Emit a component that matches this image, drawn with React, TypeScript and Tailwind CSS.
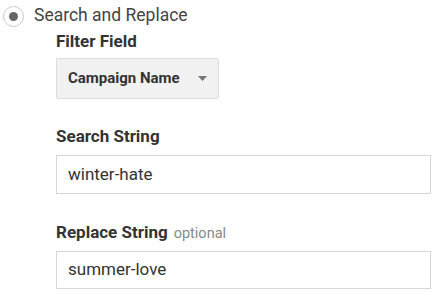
export default function App() {
  return (
    <div className="w-[444px] h-[302px] bg-white overflow-hidden font-['Roboto',sans-serif] text-[#333]">
      <div className="flex items-center h-[32px] pl-[3px]">
        <div className="w-[21px] h-[21px] rounded-full border border-[#c8c8c8] flex items-center justify-center">
          <div className="w-[9px] h-[9px] rounded-full bg-[#666]" />
        </div>
        <span className="ml-[10px] text-[17.5px] text-[#444] leading-none">Search and Replace</span>
      </div>
      <div className="pl-[56px] pr-[13px]">
        <div className="text-[17px] font-bold text-[#333] leading-[20px] -mt-[1px]">Filter Field</div>
        <div className="mt-[7px] w-[163px] h-[41px] bg-[#f1f1f1] border border-[#dcdcdc] rounded-[2px] flex items-center pl-[11px] pr-[11px]">
          <span className="text-[15px] font-bold text-[#333] flex-1">Campaign Name</span>
          <svg width="9" height="5" viewBox="0 0 9 5"><path d="M0 0h9L4.5 5z" fill="#777" /></svg>
        </div>
        <div className="mt-[27px] text-[17px] font-bold text-[#333] leading-[20px]">Search String</div>
        <div className="mt-[9px] h-[39px] border border-[#d6d6d6] flex items-center pl-[11px]">
          <span className="text-[17px] text-[#333]">winter-hate</span>
        </div>
        <div className="mt-[28px] flex items-baseline leading-[20px]">
          <span className="text-[17px] font-bold text-[#333]">Replace String</span>
          <span className="ml-[6px] text-[14.5px] text-[#888]">optional</span>
        </div>
        <div className="mt-[7px] h-[38px] border border-[#d6d6d6] flex items-center pl-[11px]">
          <span className="text-[17px] text-[#333]">summer-love</span>
        </div>
      </div>
    </div>
  );
}
